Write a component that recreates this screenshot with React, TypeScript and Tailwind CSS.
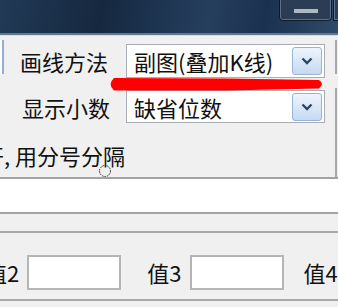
import React from "react";

const FONT = { fontFamily: '"Noto Sans CJK SC", "Noto Sans", sans-serif' };

function DropButton() {
  return (
    <div className="absolute right-[2px] top-[2px] flex h-[28px] w-[30px] items-center justify-center rounded-[3px] border border-[#98b3d6] bg-[linear-gradient(180deg,#eef4fd_0%,#dce8f9_45%,#c6d9f2_100%)]">
      <svg width="12" height="8" viewBox="0 0 12 8">
        <path d="M1.5 1.5 L6 6 L10.5 1.5" fill="none" stroke="#2f4563" strokeWidth="2.4" />
      </svg>
    </div>
  );
}

function Combo({ text, h }: { text: string; h: string }) {
  return (
    <div className={`relative flex w-[199px] items-center border border-[#a9adb4] bg-white pl-[7px] text-[22px] leading-none text-[#111] ${h}`}>
      {text}
      <DropButton />
    </div>
  );
}

function ValueField() {
  return <div className="h-[35px] w-[94px] border-2 border-[#b5b5b5] bg-white" />;
}

export default function App() {
  return (
    <div className="h-[307px] w-[338px] overflow-hidden bg-[#f0f0f0]" style={FONT}>
      {/* title bar */}
      <div className="relative h-[33px] bg-[linear-gradient(100deg,#223a56_0%,#15283f_30%,#1f3754_50%,#263f5d_62%,#1b3150_78%,#2f4a68_100%)]">
        <div className="absolute right-[6px] top-[-2px] h-[23px] w-[53px] rounded-b-[4px] border border-[#0f1a28] bg-[#2a3d55] shadow-[inset_0_0_0_1px_rgba(160,180,205,0.45)]">
          <div className="ml-[14px] mt-[10px] h-[4px] w-[24px] bg-[#aeb8c4]" />
        </div>
        <div className="absolute right-[-6px] top-[-2px] h-[23px] w-[11px] border border-[#0f1a28] bg-[#2a3d55] shadow-[inset_0_0_0_1px_rgba(160,180,205,0.45)]" />
      </div>
      <div className="h-[2px] bg-[#627890]" />
      <div className="h-[1px] bg-[#d8dde3]" />

      {/* top panel */}
      <div className="relative flex h-[143px] border-b-2 border-[#a3a3a3]">
        <div className="flex flex-1 flex-col">
          <div className="flex items-start pt-[4px]">
            <div className="h-[34px] w-[4px] border-r-2 border-[#8fb0d8] bg-white" />
            <div className="ml-[16px] mt-[4px] flex h-[34px] w-[106px] items-center text-[22px] leading-none text-[#111]">
              画线方法
            </div>
            <div className="mt-[4px]">
              <Combo text="副图(叠加K线)" h="h-[34px]" />
            </div>
          </div>
          <div className="mt-[12px] flex items-center">
            <div className="ml-[22px] flex h-[33px] w-[104px] items-center text-[22px] leading-none text-[#111]">
              显示小数
            </div>
            <Combo text="缺省位数" h="h-[33px]" />
          </div>
          <div className="ml-[-18px] mt-[21px] whitespace-nowrap text-[22px] leading-none text-[#111]">
            开, 用分号分隔
          </div>
        </div>
        <div className="flex w-[3px] flex-col">
          <div className="mt-[4px] h-[34px] border-l-2 border-[#a8a8a8]" />
          <div className="mt-[14px] flex-1 border-l-2 border-[#a8a8a8]" />
        </div>

        {/* red marker stroke */}
        <svg className="absolute left-[107px] top-[40px]" width="220" height="18" viewBox="0 0 220 18">
          <path d="M7 2 L120 2.5 L212 4 Q218 8 212 12.5 L120 14.5 L7 14.5 Q0 8.5 7 2 Z" fill="#ff0000" />
        </svg>
        {/* busy cursor */}
        <svg className="absolute left-[98px] top-[128px]" width="14" height="14" viewBox="0 0 14 14">
          <circle cx="7" cy="7" r="5.5" fill="none" stroke="#222" strokeWidth="1" strokeDasharray="1.5 1" />
        </svg>
      </div>

      {/* text input */}
      <div className="h-[33px] bg-white" />
      <div className="h-[2px] bg-[#a3a3a3]" />
      <div className="h-[17px]" />
      <div className="h-[2px] bg-[#a9a9a9]" />

      {/* values row */}
      <div className="flex h-[68px] items-center border-b-2 border-[#a9a9a9] pt-[12px] text-[22px] leading-none text-[#111]">
        <span className="ml-[-15px] whitespace-nowrap">值2</span>
        <div className="ml-[8px]">
          <ValueField />
        </div>
        <span className="ml-[26px] whitespace-nowrap">值3</span>
        <div className="ml-[9px]">
          <ValueField />
        </div>
        <span className="ml-[19px] whitespace-nowrap">值4</span>
      </div>
    </div>
  );
}
